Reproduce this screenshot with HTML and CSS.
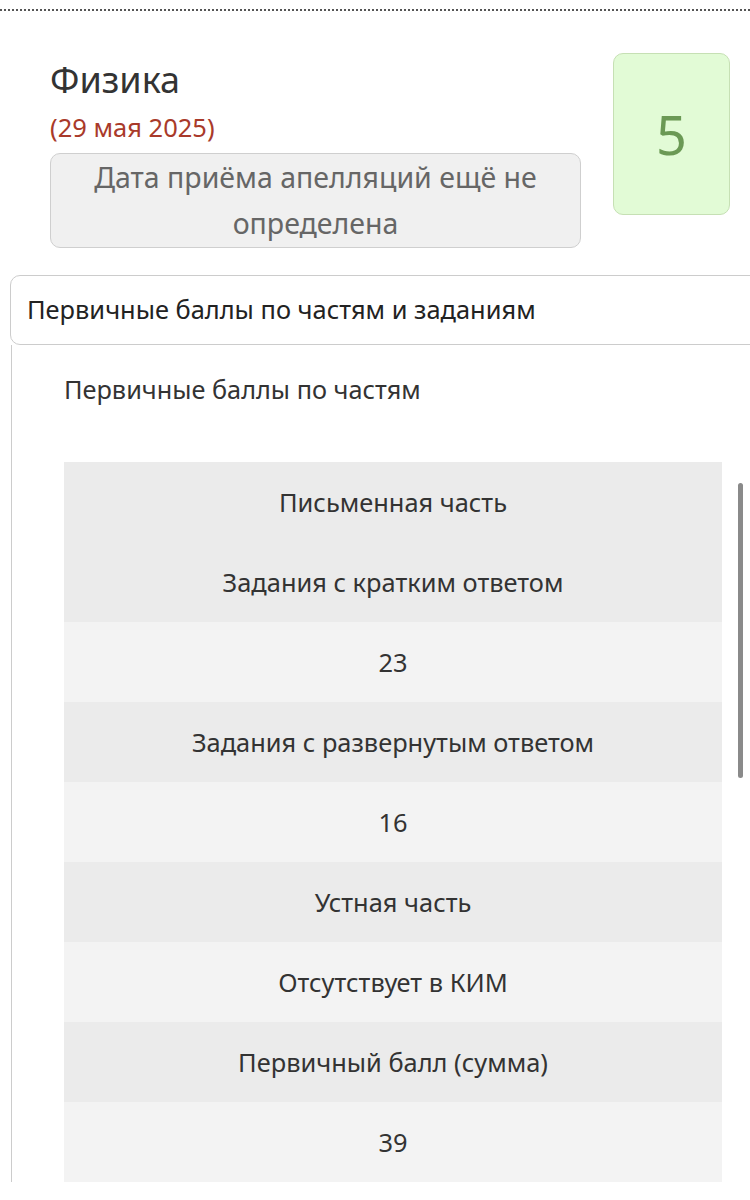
FILE: index.html
```html
<!DOCTYPE html>
<html lang="ru">
<head>
<meta charset="utf-8">
<title>Физика</title>
<link rel="stylesheet" href="styles.css">
</head>
<body>
<div class="topline"></div>
<section class="exam">
  <div class="exam-info">
    <h1 class="exam-title">Физика</h1>
    <div class="exam-date">(29 мая 2025)</div>
    <div class="appeal-btn">Дата приёма апелляций ещё не определена</div>
  </div>
  <div class="grade">5</div>
</section>
<section class="acc">
  <div class="acc-head">Первичные баллы по частям и заданиям</div>
  <div class="acc-body">
    <div class="acc-sub">Первичные баллы по частям</div>
    <table class="scores">
      <tr class="dark"><td>Письменная часть</td></tr>
      <tr class="dark"><td>Задания с кратким ответом</td></tr>
      <tr class="light"><td>23</td></tr>
      <tr class="dark"><td>Задания с развернутым ответом</td></tr>
      <tr class="light"><td>16</td></tr>
      <tr class="dark"><td>Устная часть</td></tr>
      <tr class="light"><td>Отсутствует в КИМ</td></tr>
      <tr class="dark"><td>Первичный балл (сумма)</td></tr>
      <tr class="light"><td>39</td></tr>
    </table>
  </div>
</section>
<div class="scrollbar"></div>
</body>
</html>
```
FILE: styles.css
```css
html, body {
  margin: 0;
  padding: 0;
  background: #ffffff;
  overflow: hidden;
}
body {
  font-family: "Noto Sans", "Open Sans", sans-serif;
  color: #333333;
  width: 750px;
  height: 1200px;
  position: relative;
}
.topline {
  margin-top: 9px;
  border-top: 2px dotted #555555;
}
.exam {
  display: flex;
  align-items: flex-start;
  padding: 0 0 0 50px;
}
.exam-info {
  width: 531px;
  padding-top: 47px;
}
.exam-title {
  margin: 0;
  font-size: 36px;
  font-weight: 400;
  line-height: 44px;
  color: #333333;
}
.exam-date {
  font-size: 25.5px;
  line-height: 32px;
  color: #a93a2a;
  margin-top: 9px;
}
.appeal-btn {
  margin-top: 10px;
  box-sizing: border-box;
  height: 95px;
  border: 1.5px solid #cfcfcf;
  border-radius: 10px;
  background: #f0f0f0;
  color: #666666;
  font-size: 28.5px;
  line-height: 46px;
  text-align: center;
  padding: 0 20px;
}
.grade {
  margin-left: 32px;
  margin-top: 42px;
  box-sizing: border-box;
  width: 117px;
  height: 162px;
  border: 1.5px solid #c6e0b4;
  border-radius: 10px;
  background: #e2fbd6;
  color: #6b9955;
  font-size: 54px;
  display: flex;
  align-items: center;
  justify-content: center;
}
.acc {
  margin-top: 27px;
  margin-left: 10px;
  width: 760px;
}
.acc-head {
  box-sizing: border-box;
  height: 70px;
  border: 1.5px solid #cccccc;
  border-radius: 10px;
  padding-left: 16px;
  padding-bottom: 2px;
  display: flex;
  align-items: center;
  font-size: 25.4px;
  color: #222222;
}
.acc-body {
  border-left: 1.5px solid #cccccc;
  margin-left: 1px;
  padding: 0 0 0 52px;
}
.acc-sub {
  font-size: 25.3px;
  line-height: 32px;
  padding-top: 28px;
  padding-bottom: 57px;
  color: #333333;
}
.scores {
  width: 658px;
  border-collapse: collapse;
}
.scores td {
  height: 80px;
  padding: 0;
  text-align: center;
  vertical-align: middle;
  font-size: 25.4px;
  color: #333333;
}
.scores .dark td { background: #ebebeb; }
.scores .light td { background: #f3f3f3; }
.scrollbar {
  position: absolute;
  left: 738px;
  top: 483px;
  width: 5px;
  height: 295px;
  border-radius: 3px;
  background: #8a8a8a;
}
```
